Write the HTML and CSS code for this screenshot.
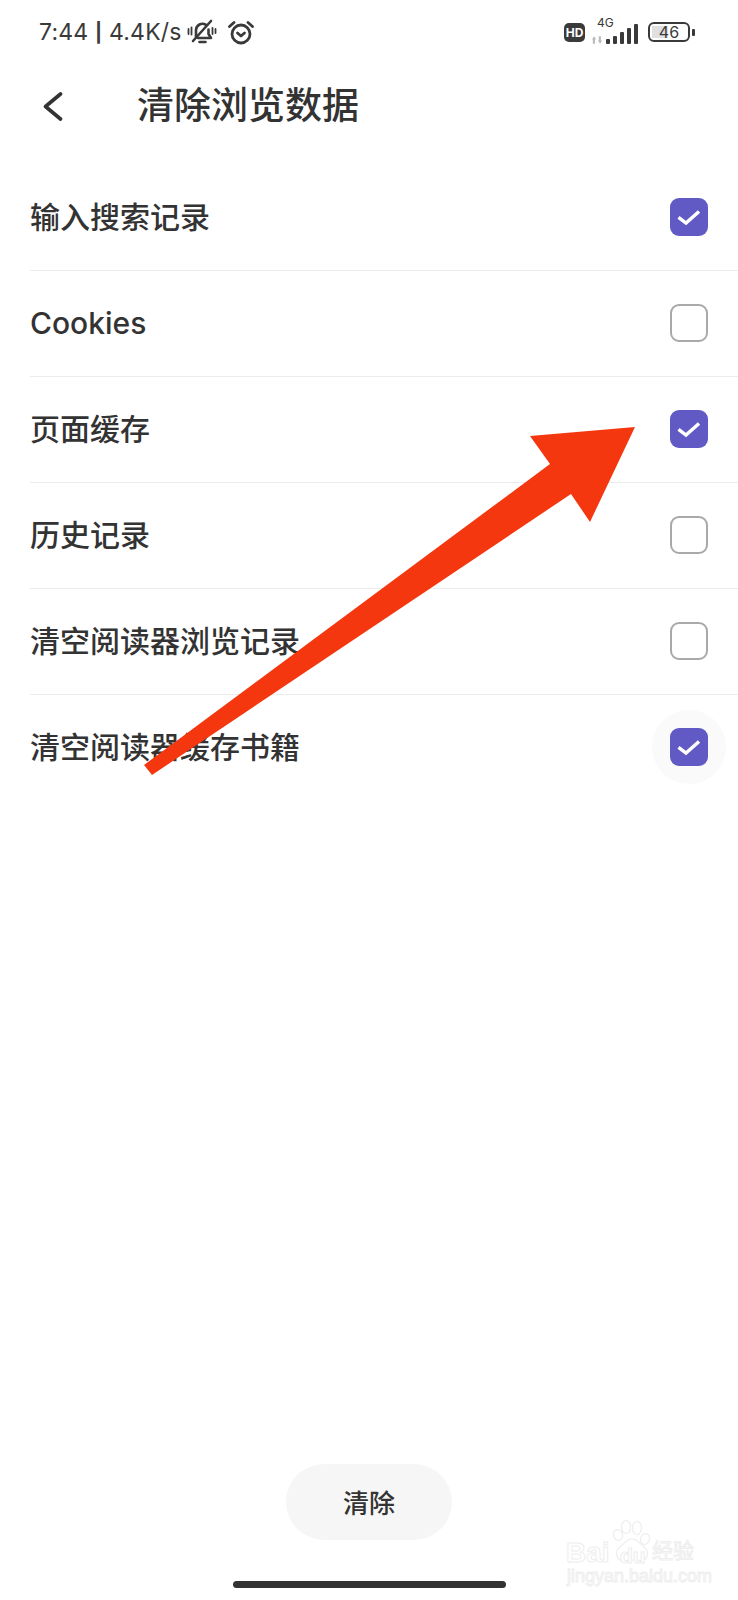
FILE: index.html
```html
<!DOCTYPE html>
<html lang="zh-CN">

<head>
    <meta charset="UTF-8">
    <title>清除浏览数据</title>
    <link rel="stylesheet" href="styles.css">
</head>

<body>
    <div class="page">
        <div class="status-bar">
            <span class="status-text">7:44 <span class="status-sep">|</span> 4.4K/s</span>
            <svg class="icon-bell" viewBox="0 0 30 26" fill="none" stroke="#3a3a3a" stroke-width="2.6" stroke-linecap="round" stroke-linejoin="round">
                <path d="M9 18V11a6.5 6.5 0 0 1 10-5.2"></path>
                <path d="M21.5 10.5V15l2.500 4H11"></path>
                <path d="M12.5 23h6"></path>
                <path d="M6 22 24 2"></path>
                <path d="M1.500 10v5M4.500 8.500v7M25.500 9v6M28.500 10v4" stroke-width="1.800"></path>
            </svg>
            <svg class="icon-alarm" viewBox="0 0 26 25" fill="none" stroke="#3a3a3a" stroke-width="2.800" stroke-linecap="round" stroke-linejoin="round">
                <circle cx="13" cy="14" r="9"></circle>
                <path d="M9.500 13l3.500 3 3.500-3"></path>
                <path d="M1.500 6.500 6 2.500M24.500 6.500 20 2.500"></path>
            </svg>
            <div class="status-right">
                <span class="hd-badge">HD</span>
                <div class="signal">
                    <span class="net-label">4G</span>
                    <svg class="net-arrows" viewBox="0 0 13 9" fill="#bbb">
                        <path d="M1 9V4H0l2.500-4L5 4H3.500V9zM8 0v5H7l2.500 4L12 5h-1.500V0z"></path>
                    </svg>
                    <div class="bars">
                        <span class="bar bar-1"></span>
                        <span class="bar bar-2"></span>
                        <span class="bar bar-3"></span>
                        <span class="bar bar-4"></span>
                        <span class="bar bar-5"></span>
                    </div>
                </div>
                <div class="battery">
                    <span class="battery-fill"></span>
                    <span class="battery-num">46</span>
                </div>
                <span class="battery-nub"></span>
            </div>
        </div>

        <div class="header">
            <svg class="icon-back" viewBox="0 0 20 29" fill="none" stroke="#333" stroke-width="3.600" stroke-linecap="round" stroke-linejoin="round">
                <path d="M17.500 2 2.500 14.500 17.500 27"></path>
            </svg>
            <h1 class="title">清除浏览数据</h1>
        </div>

        <ul class="option-list">
            <li class="option">
                <span class="option-text">输入搜索记录</span>
                <span class="check checked"><svg viewBox="0 0 38 38" fill="none"><path d="M8.500 19.300l7.500 5.700L29 13.500" class="tick"></path></svg></span>
            </li>
            <li class="option">
                <span class="option-text latin">Cookies</span>
                <span class="check"></span>
            </li>
            <li class="option">
                <span class="option-text">页面缓存</span>
                <span class="check checked"><svg viewBox="0 0 38 38" fill="none"><path d="M8.500 19.300l7.500 5.700L29 13.500" class="tick"></path></svg></span>
            </li>
            <li class="option">
                <span class="option-text">历史记录</span>
                <span class="check"></span>
            </li>
            <li class="option">
                <span class="option-text">清空阅读器浏览记录</span>
                <span class="check"></span>
            </li>
            <li class="option last">
                <span class="option-text">清空阅读器缓存书籍</span>
                <span class="check checked pressed"><svg viewBox="0 0 38 38" fill="none"><path d="M8.500 19.300l7.500 5.700L29 13.500" class="tick"></path></svg></span>
            </li>
        </ul>

        <div class="footer">
            <button class="clear-btn" type="button">清除</button>
        </div>
        <div class="home-bar"></div>

        <!-- red arrow drawn on top of the screenshot -->
        <svg class="arrow" viewBox="0 0 738 1600">
            <polygon points="635,427 530,436 550,464 144,765 152,775 571,494 590,522" fill="#f5370f"></polygon>
        </svg>

        <div class="watermark">
            <svg class="wm-paw" viewBox="0 0 40 44" fill="#fff" stroke="#eeeeee" stroke-width="1.200">
                <ellipse cx="6" cy="15" rx="4.500" ry="5.500" transform="rotate(-20 6 15)"></ellipse>
                <ellipse cx="14" cy="7" rx="4.500" ry="6.500"></ellipse>
                <ellipse cx="25" cy="8" rx="4.500" ry="6.500"></ellipse>
                <ellipse cx="33" cy="19" rx="4.500" ry="5.500" transform="rotate(20 33 19)"></ellipse>
                <path d="M20 19c6 0 8 5 12 8 6 4 4 14-4 14-3 0-5-1-8-1s-5 1-8 1c-8 0-10-10-4-14 4-3 6-8 12-8z"></path>
            </svg>
            <span class="wm-bai">Bai</span>
            <span class="wm-du">du</span>
            <span class="wm-cn">经验</span>
            <span class="wm-url">jingyan.baidu.com</span>
        </div>
    </div>
</body>

</html>
```

FILE: styles.css
```css
* {
    padding: 0;
    margin: 0;
    box-sizing: border-box;
}

body {
    background-color: #fff;
    color: #333;
    font-family: "Inter", "Noto Sans CJK SC", sans-serif;
}

.page {
    position: relative;
    width: 738px;
    height: 1600px;
    display: flex;
    flex-direction: column;
    overflow: hidden;
}

.status-bar {
    display: flex;
    align-items: center;
    height: 64px;
    padding-left: 39px;
    color: #3a3a3a;
}

.status-text {
    font-size: 23px;
    letter-spacing: 0.2px;
}

.status-sep {
    font-size: 19px;
    font-weight: 700;
    vertical-align: 1px;
}

.icon-bell {
    width: 30px;
    height: 26px;
    margin-left: 5px;
}

.icon-alarm {
    width: 26px;
    height: 25px;
    margin-left: 11px;
}

.status-right {
    display: flex;
    align-items: center;
    margin-left: auto;
    padding-right: 43px;
}

.hd-badge {
    width: 21px;
    height: 19px;
    border-radius: 5px;
    background-color: #3a3a3a;
    color: #fff;
    font-size: 12px;
    font-weight: 700;
    line-height: 19px;
    text-align: center;
}

.signal {
    position: relative;
    width: 47px;
    height: 24px;
    margin-left: 6px;
}

.net-label {
    position: absolute;
    left: 6px;
    top: -5px;
    font-size: 12px;
}

.net-arrows {
    position: absolute;
    left: 1px;
    bottom: 0;
    width: 11px;
    height: 8px;
}

.bars {
    position: absolute;
    right: 0;
    bottom: 0;
    display: flex;
    align-items: flex-end;
    gap: 3px;
}

.bar {
    width: 4px;
    background-color: #3a3a3a;
    border-radius: 1px;
}

.bar-1 {
    height: 5px;
}

.bar-2 {
    height: 8px;
}

.bar-3 {
    height: 12px;
}

.bar-4 {
    height: 16px;
}

.bar-5 {
    height: 20px;
}

.battery {
    position: relative;
    width: 42px;
    height: 20px;
    margin-left: 10px;
    border: 2px solid #3a3a3a;
    border-radius: 6px;
    text-align: center;
}

.battery-fill {
    position: absolute;
    left: 2px;
    top: 2px;
    bottom: 2px;
    width: 16px;
    background-color: #e0e0e0;
}

.battery-num {
    position: relative;
    display: block;
    font-size: 16px;
    line-height: 16px;
}

.battery-nub {
    width: 3px;
    height: 7px;
    margin-left: 2px;
    background-color: #3a3a3a;
    border-radius: 1px;
}

.header {
    display: flex;
    align-items: center;
    height: 84px;
    padding-left: 43px;
}

.icon-back {
    width: 20px;
    height: 29px;
}

.title {
    margin-left: 74px;
    padding-bottom: 7px;
    font-size: 37px;
    font-weight: 500;
    color: #333;
}

.option-list {
    list-style-type: none;
    margin-top: 17px;
    margin-left: 30px;
}

.option {
    display: flex;
    align-items: center;
    justify-content: space-between;
    height: 106px;
    padding-right: 30px;
    border-bottom: 1px solid #ececec;
}

.option.last {
    border-bottom: none;
}

.option-text {
    padding-bottom: 6px;
    font-size: 30px;
    font-weight: 500;
}

.option-text.latin {
    padding-bottom: 2px;
}

.check {
    position: relative;
    width: 38px;
    height: 38px;
    margin-bottom: 2px;
    border: 2px solid #a9a9a9;
    border-radius: 9px;
}

.check.checked {
    border: none;
}

.check svg {
    position: relative;
    display: block;
    width: 38px;
    height: 38px;
    border-radius: 9px;
    background-color: #625ac4;
}

.tick {
    stroke: #fff;
    stroke-width: 3.400;
    stroke-linecap: butt;
}

/* touch ripple behind the last checkbox */
.check.pressed::before {
    content: "";
    position: absolute;
    left: -18px;
    top: -18px;
    width: 74px;
    height: 74px;
    border-radius: 50%;
    background-color: #fafafa;
}

.footer {
    display: flex;
    justify-content: center;
    margin-top: auto;
}

.clear-btn {
    width: 166px;
    height: 76px;
    padding-bottom: 2px;
    border: none;
    border-radius: 38px;
    background-color: #f6f6f6;
    color: #333;
    font-family: "Noto Sans CJK SC", sans-serif;
    font-size: 26px;
    font-weight: 500;
}

.home-bar {
    width: 273px;
    height: 7px;
    margin: 41px auto 12px;
    border-radius: 4px;
    background-color: #333;
}

.arrow {
    position: absolute;
    left: 0;
    top: 0;
    width: 738px;
    height: 1600px;
}

.watermark {
    position: absolute;
    left: 560px;
    top: 1515px;
    width: 150px;
    height: 75px;
    font-family: "Liberation Sans", "Noto Sans CJK SC", sans-serif;
    color: #fff;
    line-height: 1;
}

.wm-paw {
    position: absolute;
    left: 52px;
    top: 5px;
    width: 40px;
    height: 44px;
}

.wm-bai,
.wm-du,
.wm-cn,
.wm-url {
    position: absolute;
    -webkit-text-stroke: 1px #eeeeee;
}

.wm-bai {
    left: 6px;
    top: 24px;
    font-size: 28px;
    font-weight: 700;
}

.wm-du {
    left: 60px;
    top: 30px;
    font-size: 21px;
    font-weight: 700;
}

.wm-cn {
    left: 92px;
    top: 25px;
    font-size: 21px;
}

.wm-url {
    left: 7px;
    top: 52px;
    font-size: 18px;
    white-space: nowrap;
}
```
